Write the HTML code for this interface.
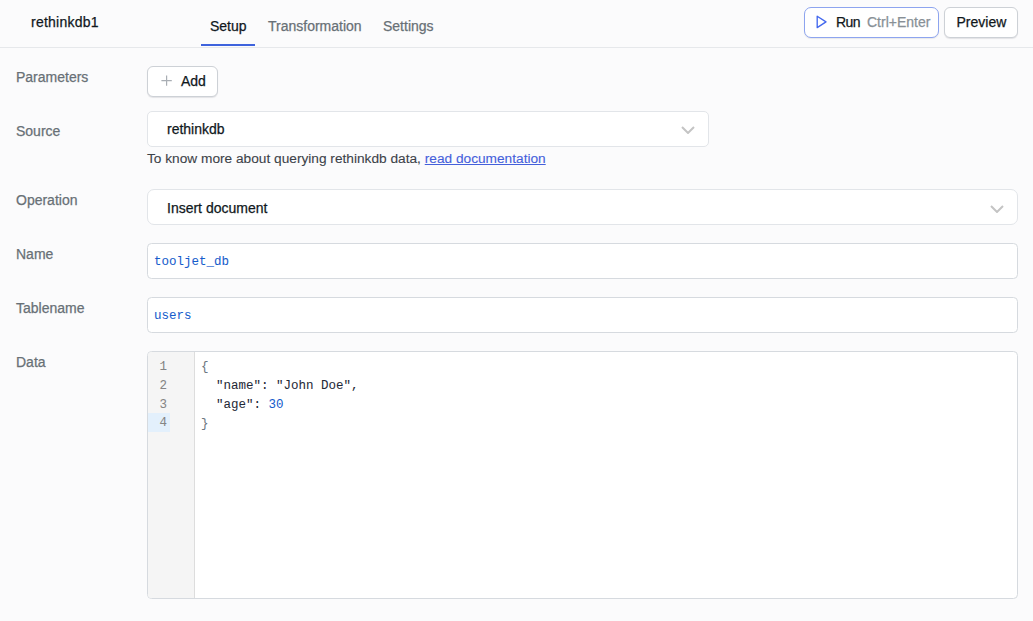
<!DOCTYPE html>
<html><head><meta charset="utf-8">
<style>
*{box-sizing:border-box;margin:0;padding:0}
html,body{width:1033px;height:621px;overflow:hidden}
body{background:#fbfbfc;font-family:"Liberation Sans",sans-serif;font-size:14px;color:#11181c;position:relative}
.a{position:absolute;white-space:nowrap;line-height:16px;-webkit-text-stroke:0.25px currentColor}
.hdr{position:absolute;left:0;top:0;width:1033px;height:48px;border-bottom:1px solid #e6e8eb;background:#fbfbfc}
.tab{color:#687076}
.ul{position:absolute;left:201px;top:44px;width:54px;height:2px;background:#3e63dd}
.btn{position:absolute;background:#fff;border:1px solid #cdd1d6;border-radius:6px}
.lbl{color:#687076}
.box{position:absolute;left:147px;background:#fff;border:1px solid #d6dadf;border-radius:4.5px}
.mono{font-family:"Liberation Mono",monospace;font-size:12.5px;-webkit-text-stroke:0.05px currentColor}
.chev{position:absolute;width:14px;height:8px}
</style></head><body>
<div class="hdr"></div>
<div class="a" style="left:31px;top:14px;letter-spacing:0.25px">rethinkdb1</div>
<div class="a" style="left:210px;top:18px">Setup</div>
<div class="a tab" style="left:268px;top:18px">Transformation</div>
<div class="a tab" style="left:383px;top:18px">Settings</div>
<div class="ul"></div>

<div class="btn" style="left:804px;top:7px;width:135px;height:31px;border-color:#8da4ef;border-radius:7px;box-shadow:0 1px 1px rgba(16,24,40,0.08)"></div>
<svg class="a" style="left:815px;top:15px" width="13" height="14" viewBox="0 0 13 14"><path d="M2.2 1.2 L11 6.9 L2.2 12.6 Z" fill="none" stroke="#4469ee" stroke-width="1.35" stroke-linejoin="round"/></svg>
<div class="a" style="left:836px;top:14px;letter-spacing:-0.6px">Run</div>
<div class="a" style="left:867px;top:14px;color:#889096">Ctrl+Enter</div>

<div class="btn" style="left:944px;top:7px;width:74px;height:31px;box-shadow:0 1px 1px rgba(16,24,40,0.10)"></div>
<div class="a" style="left:956.5px;top:14.3px">Preview</div>

<div class="a lbl" style="left:16px;top:69px">Parameters</div>
<div class="a lbl" style="left:16px;top:123px">Source</div>
<div class="a lbl" style="left:16px;top:192px">Operation</div>
<div class="a lbl" style="left:16px;top:246px">Name</div>
<div class="a lbl" style="left:16px;top:300px">Tablename</div>
<div class="a lbl" style="left:16px;top:354px">Data</div>

<div class="btn" style="left:147px;top:66px;width:71px;height:31px;box-shadow:0 1px 1px rgba(16,24,40,0.10)"></div>
<svg class="a" style="left:161px;top:75px;-webkit-text-stroke:0" width="12" height="12" viewBox="0 0 12 12"><path d="M5.6 0.6V10.8M0.4 5.7H10.8" stroke="#a9aeb4" stroke-width="1.2"/></svg>
<div class="a" style="left:181px;top:73px">Add</div>

<div class="box" style="top:111px;width:562px;height:36px;border-color:#e2e5e9;border-radius:5px"></div>
<div class="a" style="left:167px;top:121px">rethinkdb</div>
<svg class="chev" style="left:681px;top:126px" viewBox="0 0 14 8"><path d="M1 1L7 7L13 1" fill="none" stroke="#c4c4c4" stroke-width="2"/></svg>
<div class="a" style="left:147px;top:150.7px;font-size:13.7px;color:#3c4248;-webkit-text-stroke:0.1px currentColor">To know more about querying rethinkdb data, <span style="color:#4460db;text-decoration:underline">read documentation</span></div>

<div class="box" style="top:189px;width:871px;height:36px;border-color:#e2e5e9;border-radius:7px"></div>
<div class="a" style="left:167px;top:200px">Insert document</div>
<svg class="chev" style="left:990px;top:205px" viewBox="0 0 14 8"><path d="M1 1L7 7L13 1" fill="none" stroke="#c4c4c4" stroke-width="2"/></svg>

<div class="box" style="top:243px;width:871px;height:36px"></div>
<div class="a mono" style="left:154px;top:254px;color:#165dcc">tooljet_db</div>
<div class="box" style="top:297px;width:871px;height:36px"></div>
<div class="a mono" style="left:154px;top:308px;color:#165dcc">users</div>

<div class="box" style="top:351px;width:871px;height:248px;overflow:hidden">
  <div style="position:absolute;left:0;top:0;width:47px;height:100%;background:#f5f5f5;border-right:1px solid #dddddd"></div>
  <div style="position:absolute;left:0;top:61px;width:22px;height:19px;background:#e3f0fc"></div>
</div>
<div class="a mono" style="left:159.4px;top:358px;line-height:18.75px;color:#858585">1<br>2<br>3<br>4</div>
<div class="a mono" style="left:201px;top:358.3px;line-height:18.75px;color:#1f2a37;white-space:pre"><span style="color:#6e7781">{</span><br>  "name": "John Doe",<br>  "age": <span style="color:#165dcc">30</span><br><span style="color:#6e7781">}</span></div>
</body></html>
